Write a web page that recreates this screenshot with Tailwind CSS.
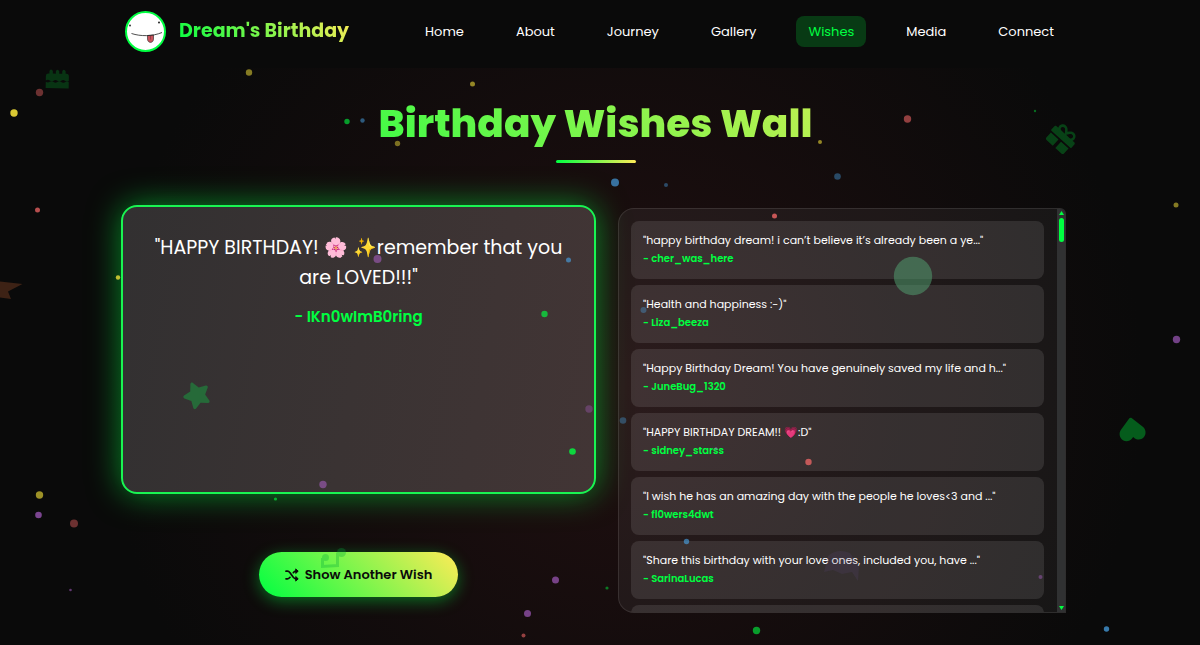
<!DOCTYPE html>
<html lang="en">
  <head>
    <meta charset="UTF-8" />
    <meta name="viewport" content="width=device-width, initial-scale=1.0" />
    <script src="https://cdn.jsdelivr.net/npm/@tailwindcss/browser@4"></script>
    <title>Dream's Birthday</title>
  </head>

  <body
    class="relative h-screen overflow-hidden bg-[#0a0a0a] pr-[9px] font-['Poppins','Inter',sans-serif] text-white"
  >
    <div class="absolute inset-0 bg-[radial-gradient(circle_at_52%_60%,#200f10_0%,#0a0a0a_520px)]"></div>

    <!-- navbar -->
    <header class="relative bg-[#0a0a0a] pr-[9px] -mr-[9px]">
      <nav class="mx-auto flex h-[68px] max-w-[941px] items-center justify-between pb-[5px]">
        <a href="#home" class="flex items-center gap-[13px]">
          <svg class="size-[41px]" viewBox="0 0 41 41" aria-hidden="true">
            <circle cx="20.5" cy="20.5" r="19.5" fill="#fff" stroke="#00ff41" stroke-width="2" />
            <circle cx="5" cy="14.5" r="0.9" fill="#222" />
            <circle cx="34" cy="11.5" r="1" fill="#222" />
            <path d="M22.500 24.500v3.500c0 4.500 6 4.500 6 0v-4z" fill="#c9525c" stroke="#222" stroke-width=".6" />
            <path d="M25.500 24.500v4" stroke="#7a2c35" stroke-width=".6" />
            <path d="M6.500 22.500c9 3 21 3 30.500-1" fill="none" stroke="#222" stroke-width=".8" />
          </svg>
          <span class="bg-linear-45/srgb from-[#00ff41] to-[#ffeb57] bg-clip-text text-[19px] font-bold text-transparent">Dream's Birthday</span>
        </a>
        <ul class="flex items-center gap-7 text-[13px]">
          <li><a href="#home" class="block rounded-lg px-3 py-[6px] leading-[19px]">Home</a></li>
          <li><a href="#about" class="block rounded-lg px-3 py-[6px] leading-[19px]">About</a></li>
          <li><a href="#journey" class="block rounded-lg px-3 py-[6px] leading-[19px]">Journey</a></li>
          <li><a href="#gallery" class="block rounded-lg px-3 py-[6px] leading-[19px]">Gallery</a></li>
          <li><a href="#wishes" class="block rounded-lg bg-[#083a14] px-3 py-[6px] leading-[19px] text-[#00ff41]">Wishes</a></li>
          <li><a href="#media" class="block rounded-lg px-3 py-[6px] leading-[19px]">Media</a></li>
          <li><a href="#connect" class="block rounded-lg px-3 py-[6px] leading-[19px]">Connect</a></li>
        </ul>
      </nav>
    </header>

    <!-- wishes -->
    <main id="wishes" class="relative mx-auto max-w-[941px] pt-8">
      <h1
        class="bg-linear-45/srgb from-[#00ff41] to-[#ffeb57] bg-clip-text text-center text-[39px] leading-[48px] font-extrabold text-transparent"
      >
        Birthday Wishes Wall
      </h1>
      <div class="mx-auto mt-3 h-[3px] w-20 rounded-full bg-linear-to-r/srgb from-[#00ff41] to-[#ffeb57]"></div>

      <div class="mt-[42px] grid grid-cols-[467fr_448fr] gap-[26px]">
        <div class="flex flex-col items-center">
          <div
            class="-mx-1 h-[289px] self-stretch rounded-2xl border-2 border-[#19f552] bg-[linear-gradient(100deg,#323031,#3a3333_50%,#423535)] px-6 pt-[26px] text-center shadow-[0_0_32px_#00ff4185]"
          >
            <p class="text-[19px] leading-[30px]">
              "HAPPY BIRTHDAY! 🌸 ✨remember that you are LOVED!!!"
            </p>
            <p class="mt-3 text-[15px] leading-6 font-semibold text-[#00ff41]">- IKn0wImB0ring</p>
          </div>
          <button
            class="mt-[58px] flex h-[45px] w-[199px] items-center justify-center gap-[6px] rounded-full bg-linear-45/srgb from-[#00ff41] to-[#ffeb57] text-[13px] font-semibold text-[#0a0a0a] shadow-[0_4px_16px_#00ff4166]"
          >
            <svg
              class="size-[14px]"
              viewBox="0 0 14 14"
              fill="none"
              stroke="currentColor"
              stroke-width="1.7"
              stroke-linecap="round"
              stroke-linejoin="round"
              aria-hidden="true"
            >
              <path d="M1 3.200h1.500c1.200 0 1.800.6 2.500 1.500L8.300 9.300c.7.900 1.300 1.500 2.500 1.500H12" />
              <path d="M1 10.800h1.500c1.200 0 1.800-.6 2.500-1.500M8.300 4.700c.7-.9 1.300-1.500 2.500-1.500H12" />
              <path d="M11 1.200l2.200 2L11 5.200zM11 8.800l2.200 2-2.200 2z" fill="currentColor" stroke-width="1" />
            </svg>
            Show Another Wish
          </button>
        </div>

        <div class="relative mt-[3px] h-[405px] overflow-hidden rounded-l-2xl rounded-tr-md border border-white/10 bg-white/5">
          <ul class="flex flex-col gap-[6px] pt-3 pr-[21px] pl-3 text-[11px]">
            <li class="h-[58px] shrink-0 rounded-lg bg-white/10 px-3 pt-[9px]">
              <p class="leading-5">"happy birthday dream! i can’t believe it’s already been a ye..."</p>
              <p class="text-[10px] leading-[18px] font-semibold text-[#00ff41]">- cher_was_here</p>
            </li>
            <li class="h-[58px] shrink-0 rounded-lg bg-white/10 px-3 pt-[9px]">
              <p class="leading-5">"Health and happiness :-)"</p>
              <p class="text-[10px] leading-[18px] font-semibold text-[#00ff41]">- Liza_beeza</p>
            </li>
            <li class="h-[58px] shrink-0 rounded-lg bg-white/10 px-3 pt-[9px]">
              <p class="leading-5">"Happy Birthday Dream! You have genuinely saved my life and h..."</p>
              <p class="text-[10px] leading-[18px] font-semibold text-[#00ff41]">- JuneBug_1320</p>
            </li>
            <li class="h-[58px] shrink-0 rounded-lg bg-white/10 px-3 pt-[9px]">
              <p class="leading-5">"HAPPY BIRTHDAY DREAM!! 💗:D"</p>
              <p class="text-[10px] leading-[18px] font-semibold text-[#00ff41]">- sidney_starss</p>
            </li>
            <li class="h-[58px] shrink-0 rounded-lg bg-white/10 px-3 pt-[9px]">
              <p class="leading-5">"I wish he has an amazing day with the people he loves&lt;3 and ..."</p>
              <p class="text-[10px] leading-[18px] font-semibold text-[#00ff41]">- fl0wers4dwt</p>
            </li>
            <li class="h-[58px] shrink-0 rounded-lg bg-white/10 px-3 pt-[9px]">
              <p class="leading-5">"Share this birthday with your love ones, included you, have ..."</p>
              <p class="text-[10px] leading-[18px] font-semibold text-[#00ff41]">- SarinaLucas</p>
            </li>
            <li class="h-[58px] shrink-0 rounded-lg bg-white/10"></li>
          </ul>
          <!-- scrollbar -->
          <div class="absolute inset-y-0 right-0 flex w-2 flex-col items-center bg-[#303132]">
            <svg class="mt-[2px] h-1 w-[5px]" viewBox="0 0 5 4" fill="#00ff41"><path d="M2.500 0L5 4H0z" /></svg>
            <div class="mt-[3px] h-6 w-[5px] rounded-full bg-[#00ff41]"></div>
            <svg class="mt-auto mb-[2px] h-1 w-[5px]" viewBox="0 0 5 4" fill="#00ff41"><path d="M2.500 4L5 0H0z" /></svg>
          </div>
        </div>
      </div>
    </main>

    <!-- confetti and floating icons -->
    <svg class="pointer-events-none absolute inset-0 size-full" aria-hidden="true">
      <g fill="#ffeb3b">
        <circle cx="14" cy="113" r="3.7" opacity=".85" />
        <circle cx="249" cy="72.5" r="3.2" opacity=".5" />
        <circle cx="472.5" cy="84" r="2.5" opacity=".55" />
        <circle cx="397.5" cy="143.5" r="2.7" opacity=".45" />
        <circle cx="820" cy="142" r="2" opacity=".55" />
        <circle cx="118" cy="277.5" r="2.2" opacity=".75" />
        <circle cx="39.5" cy="495" r="3.7" opacity=".6" />
        <circle cx="1176" cy="205" r="2.5" opacity=".5" />
      </g>
      <g fill="#ff6b6b">
        <circle cx="39.5" cy="92.5" r="3.7" opacity=".4" />
        <circle cx="37.5" cy="210" r="2.5" opacity=".7" />
        <circle cx="907.5" cy="119" r="3.7" opacity=".55" />
        <circle cx="774.5" cy="216" r="2.5" opacity=".75" />
        <circle cx="808.5" cy="462" r="3.2" opacity=".7" />
        <circle cx="74" cy="523.5" r="4" opacity=".4" />
        <circle cx="523.5" cy="635.5" r="2" opacity=".55" />
      </g>
      <g fill="#4aa8ee">
        <circle cx="362.5" cy="120.5" r="2.2" opacity=".5" />
        <circle cx="615" cy="182.5" r="4" opacity=".65" />
        <circle cx="666" cy="185" r="2" opacity=".4" />
        <circle cx="837.5" cy="176.5" r="3.3" opacity=".4" />
        <circle cx="568.5" cy="260" r="2.5" opacity=".6" />
        <circle cx="643.5" cy="310" r="3" opacity=".35" />
        <circle cx="623" cy="420.5" r="3.3" opacity=".35" />
        <circle cx="686.5" cy="541.5" r="2.7" opacity=".6" />
        <circle cx="1106.5" cy="629" r="2.7" opacity=".7" />
      </g>
      <g fill="#b865d8">
        <circle cx="377.5" cy="259" r="4" opacity=".5" />
        <circle cx="589" cy="409" r="3.7" opacity=".3" />
        <circle cx="323" cy="484.5" r="3.7" opacity=".5" />
        <circle cx="38.5" cy="515" r="3.3" opacity=".65" />
        <circle cx="70.5" cy="590" r="1.3" opacity=".5" />
        <circle cx="555.5" cy="580" r="3.5" opacity=".6" />
        <circle cx="527.5" cy="613.5" r="3.5" opacity=".6" />
        <circle cx="716" cy="448.5" r="1.5" opacity=".4" />
        <circle cx="1176.5" cy="339.5" r="3.7" opacity=".6" />
        <circle cx="1040.5" cy="577" r="2" opacity=".4" />
      </g>
      <g fill="#00ff41">
        <circle cx="347" cy="121.5" r="2.7" opacity=".6" />
        <circle cx="544.5" cy="314" r="3.2" opacity=".65" />
        <circle cx="572.5" cy="451.5" r="3.3" opacity=".8" />
        <circle cx="275.5" cy="499" r="1.6" opacity=".6" />
        <circle cx="607" cy="588" r="1.6" opacity=".45" />
        <circle cx="756.5" cy="630.5" r="3.7" opacity=".6" />
        <circle cx="1035" cy="111" r="1.2" opacity=".4" />
      </g>

      <!-- balloon -->
      <circle cx="913" cy="276" r="19.2" fill="#54a573" opacity=".5" />
      <!-- cake -->
      <g transform="translate(46 69) rotate(1)" fill="#00ff41" opacity=".17">
        <path d="M3.500 4.500V2q1.700-3 3.400 0v2.500h3V2q1.700-3 3.400 0v2.500h3V2q1.700-3 3.400 0v2.500h.8q2.500 0 2.500 2.500v4.500q-2 1.500-3.800 0t-3.800 0-3.800 0-3.800 0-3.800 0-4 0V7q0-2.500 2.500-2.500z" />
        <path d="M0 12.800q2 1.500 4 0t3.800 0 3.800 0 3.800 0 3.800 0 3.800 0V19H0z" />
      </g>
      <!-- gift -->
      <path
        transform="translate(1062 138) rotate(42) scale(.053) translate(-256 -256)"
        d="M32 448c0 17.700 14.300 32 32 32h160V320H32v128zm256 32h160c17.700 0 32-14.300 32-32V320H288v160zm192-320h-42.100c6.200-12.100 10.100-25.500 10.100-40 0-48.500-39.500-88-88-88-41.600 0-68.500 21.300-104 68.300-34.500-47-61.400-68.300-103-68.300-48.500 0-88 39.500-88 88 0 14.500 3.800 27.900 10.100 40H32c-17.700 0-32 14.300-32 32v80c0 8.800 7.200 16 16 16h480c8.800 0 16-7.200 16-16v-80c0-17.700-14.300-32-32-32zm-326.100 0c-22.100 0-40-17.900-40-40s17.900-40 40-40c19.900 0 34.600 3.300 86.100 80h-86.100zm206.100 0h-86.100c51.400-76.500 65.700-80 86.100-80 22.100 0 40 17.900 40 40s-17.900 40-40 40z"
        fill="#00ff41" fill-rule="evenodd" opacity=".23"
      />
      <!-- star -->
      <path
        transform="translate(197 395) rotate(-25) scale(.05) translate(-288 -270)"
        d="M259.300 17.800L194 150.200 47.900 171.500c-26.200 3.800-36.700 36.100-17.700 54.600l105.700 103-25 145.500c-4.500 26.300 23.200 46 46.400 33.700L288 439.600l130.700 68.700c23.200 12.200 50.900-7.400 46.400-33.700l-25-145.500 105.700-103c19-18.500 8.500-50.800-17.700-54.600L382 150.200 316.700 17.800c-11.700-23.600-45.600-23.900-57.400 0z"
        fill="#266a39"
      />
      <!-- heart -->
      <path
        transform="translate(1132 429) rotate(172) scale(.051) translate(-256 -256)"
        d="M462.300 62.600C407.500 15.900 326 24.300 275.700 76.200L256 96.500l-19.700-20.300C186.100 24.300 104.500 15.900 49.700 62.600c-62.800 53.600-66.100 149.800-9.900 207.900l193.500 199.800c12.500 12.900 32.800 12.900 45.300 0l193.500-199.800c56.300-58.100 53-154.300-9.800-207.900z"
        fill="#055c1c"
      />
      <!-- ribbon -->
      <path d="M0 281.500L22.500 284L8 291.500L11 299L0 297.500z" fill="#4a2818" opacity=".8" />
      <!-- music note -->
      <g opacity=".3">
        <path d="M322.500 558v8.500l15-1v-13" fill="none" stroke="#00a838" stroke-width="3" />
        <circle cx="325.500" cy="557.500" r="3.500" fill="#00a838" />
        <circle cx="341.500" cy="552.500" r="4.500" fill="#00a838" />
      </g>
      <!-- hat -->
      <path d="M828 556q9-8 22-3l9 13-1 15-6-9-10 2-9-4-9 2z" fill="#5c4a80" opacity=".18" />
    </svg>
  </body>
</html>
